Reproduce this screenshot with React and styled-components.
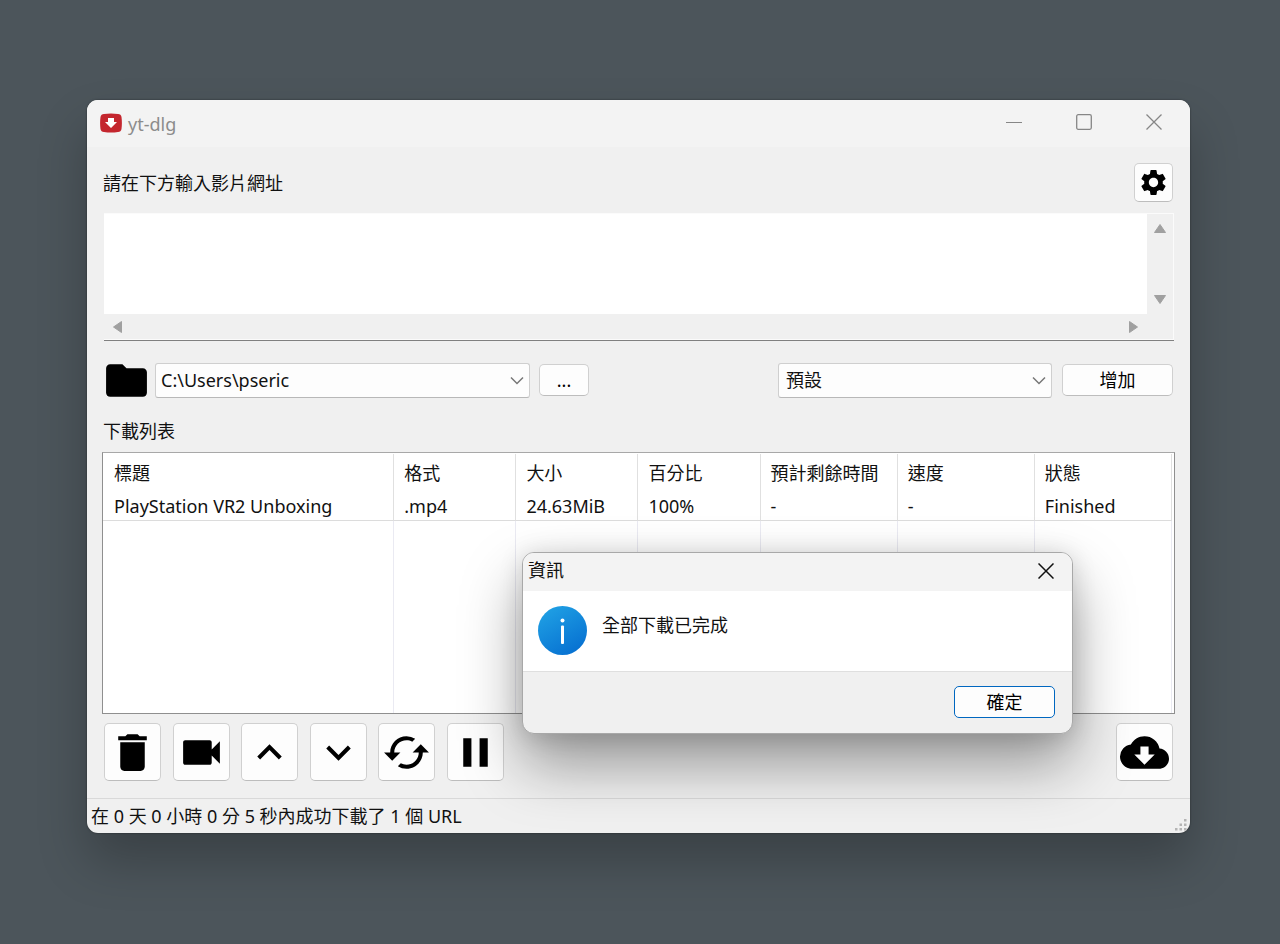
import { useState } from 'react';
import styled, { createGlobalStyle } from 'styled-components';
import {
  MdCached,
  MdCloudDownload,
  MdDelete,
  MdFolder,
  MdKeyboardArrowDown,
  MdKeyboardArrowUp,
  MdPause,
  MdSettings,
  MdVideocam,
} from 'react-icons/md';

const GlobalStyle = createGlobalStyle`
  * {
    box-sizing: border-box;
  }

  body {
    margin: 0;
    background: #4c555b;
  }

  body, button, select, textarea {
    font-family: 'Noto Sans', 'Noto Sans CJK TC', sans-serif;
    font-size: 18px;
    line-height: 24px;
    color: #111;
  }
`;

const Desktop = styled.div`
  display: flex;
  min-height: 100vh;
  padding: 100px 90px 111px 87px;
`;

const Window = styled.main`
  position: relative;
  flex: 1;
  display: flex;
  flex-direction: column;
  border-radius: 11px;
  background: #f0f0f0;
  box-shadow: 0 0 2px rgba(0, 0, 0, 0.5), 0 28px 50px rgba(0, 0, 0, 0.24);
`;

const TitleBar = styled.header`
  display: flex;
  align-items: center;
  height: 47px;
  padding: 0 1px 0 13px;
  border-radius: 11px 11px 0 0;
  background: #f3f3f3;
`;

const Title = styled.h1`
  flex: 1;
  margin: 0 0 0 6px;
  font-size: 18px;
  font-weight: 400;
  color: #8c8c8c;
`;

const CaptionButton = styled.button`
  display: flex;
  align-items: center;
  justify-content: center;
  align-self: flex-start;
  width: ${(props) => props.$width || 70}px;
  height: ${(props) => props.$height || 44}px;
  padding: 0;
  border: 0;
  background: none;
  color: ${(props) => props.$color || '#868686'};
`;

const Content = styled.div`
  flex: 1;
  display: flex;
  flex-direction: column;
  padding: 16px 15px 17px;
`;

const UrlHeader = styled.div`
  display: flex;
  align-items: center;
  justify-content: space-between;
  padding: 0 2px 0 1px;
`;

const Button = styled.button`
  display: flex;
  align-items: center;
  justify-content: center;
  width: ${(props) => props.$width}px;
  height: ${(props) => props.$height}px;
  padding: 0;
  border: 1px solid ${(props) => (props.$primary ? '#0067c0' : '#d0d0d0')};
  border-bottom-color: ${(props) => (props.$primary ? '#0067c0' : '#bdbdbd')};
  border-radius: 5px;
  background: #fdfdfd;
  color: #000;

  svg {
    flex: none;
  }
`;

const UrlBox = styled.div`
  display: grid;
  grid-template: 100px 25px / 1fr 26px;
  margin: 11px 1px 0 2px;
  padding: 1px 1px 1px 0;
  border-bottom: 1px solid #808080;
  background: #fbfbfb;
`;

const UrlInput = styled.textarea`
  width: 100%;
  height: 100%;
  padding: 2px 4px;
  border: 0;
  outline: 0;
  resize: none;
  overflow: hidden;
  background: #fff;
`;

const ScrollBar = styled.div`
  display: flex;
  flex-direction: ${(props) => (props.$vertical ? 'column' : 'row')};
  align-items: center;
  justify-content: space-between;
  padding: ${(props) => (props.$vertical ? '8px 0' : '0 8px')};
  background: #f0f0f0;
`;

const ScrollCorner = styled.div`
  background: #f0f0f0;
`;

const ScrollButton = styled.button`
  display: flex;
  padding: 0;
  border: 0;
  background: none;
  color: #a0a0a0;
`;

const OptionsRow = styled.div`
  display: flex;
  align-items: center;
  height: 50px;
  margin-top: 14px;
  padding-right: 2px;
`;

const SavePath = styled.div`
  flex: 1;
  display: flex;
  align-items: center;
  gap: 4px;
`;

const Combo = styled.div`
  display: grid;
  align-items: center;
  width: ${(props) => props.$width}px;
  margin-right: ${(props) => props.$gap}px;

  select, svg {
    grid-area: 1 / 1;
  }

  select {
    width: 100%;
    height: 35px;
    padding: 0 30px 0 ${(props) => props.$indent}px;
    border: 1px solid #cfcfcf;
    border-bottom-color: #b8b8b8;
    border-radius: 3px;
    background: #fdfdfd;
    appearance: none;
  }

  svg {
    justify-self: end;
    margin-right: 6px;
    pointer-events: none;
  }
`;

const ListLabel = styled.h2`
  margin: 14px 0 9px 1px;
  font-size: 18px;
  font-weight: 400;
`;

const ListFrame = styled.div`
  flex: 1;
  display: flex;
  min-height: 262px;
  padding: 1px 2px 0 0;
  border: 1px solid #8f8f8f;
  border-top-color: #a8a8a8;
  background: #fff;
`;

const DownloadTable = styled.table`
  width: 100%;
  table-layout: fixed;
  border-collapse: separate;
  border-spacing: 0;

  th, td {
    padding: 0 0 0 10px;
    border-right: 1px solid #e0e0e0;
    text-align: left;
    font-weight: 400;
    white-space: nowrap;
  }

  th:first-child, td:first-child {
    padding-left: 11px;
  }

  th {
    height: 38px;
  }
`;

const Row = styled.tr`
  td {
    height: 29px;
    border-bottom: 1px solid #dcdcdc;
  }
`;

const FillerRow = styled.tr`
  height: 100%;

  td {
    border-right-color: #eaeaf2;
  }
`;

const ToolBar = styled.div`
  display: flex;
  justify-content: space-between;
  margin-top: 9px;
  padding: 0 2px;
`;

const ToolGroup = styled.div`
  display: flex;
  justify-content: space-between;
  width: 400px;
`;

const StatusBar = styled.footer`
  display: flex;
  align-items: center;
  justify-content: space-between;
  height: 35px;
  padding: 1px 2px 1px 4px;
  border-top: 1px solid #d9d9d9;

  svg {
    align-self: flex-end;
  }
`;

const Dialog = styled.section`
  position: absolute;
  right: 117px;
  bottom: 99px;
  width: 551px;
  border: 1px solid #a8a8a8;
  border-radius: 12px;
  overflow: hidden;
  background: #f0f0f0;
  box-shadow: 0 30px 60px rgba(0, 0, 0, 0.38), 0 2px 24px rgba(0, 0, 0, 0.14);
`;

const DialogHeader = styled.div`
  display: flex;
  justify-content: space-between;
  height: 38px;
  padding-left: 5px;
  background: #f3f3f3;
`;

const DialogTitle = styled.h2`
  margin: 5px 0;
  font-size: 18px;
  font-weight: 400;
`;

const DialogBody = styled.div`
  display: flex;
  gap: 15px;
  height: 81px;
  padding: 15px;
  border-bottom: 1px solid #dfdfdf;
  background: #fff;
`;

const Message = styled.p`
  margin: 7px 0 0;
`;

const DialogFooter = styled.div`
  display: flex;
  justify-content: flex-end;
  padding: 14px 17px 15px;
`;

const columns = [
  { key: 'title', label: '標題', width: 291 },
  { key: 'ext', label: '格式', width: 122 },
  { key: 'size', label: '大小', width: 122 },
  { key: 'percent', label: '百分比', width: 122 },
  { key: 'eta', label: '預計剩餘時間', width: 137 },
  { key: 'speed', label: '速度', width: 137 },
  { key: 'status', label: '狀態', width: 137 },
];

const downloads = [
  {
    title: 'PlayStation VR2 Unboxing',
    ext: '.mp4',
    size: '24.63MiB',
    percent: '100%',
    eta: '-',
    speed: '-',
    status: 'Finished',
  },
];

const tools = [
  { label: '刪除', Icon: MdDelete },
  { label: '播放', Icon: MdVideocam },
  { label: '上移', Icon: MdKeyboardArrowUp },
  { label: '下移', Icon: MdKeyboardArrowDown },
  { label: '重新載入', Icon: MdCached },
  { label: '暫停', Icon: MdPause },
];

const totalWidth = columns.reduce((sum, column) => sum + column.width, 0);

function AppLogo() {
  return (
    <svg width="22" height="22" viewBox="0 0 22 22" aria-hidden="true">
      <path
        d="M4 1Q11 0 18 1Q21 1 21.5 4Q22.3 10 21.5 16Q21 19 18 19Q11 20 4 19Q1 19 .5 16Q-.3 10 .5 4Q1 1 4 1z"
        fill="#c4262e"
      />
      <path d="M8 5h6v4h3l-6 6-6-6h3z" fill="#fff" />
    </svg>
  );
}

function CloseIcon({ strokeWidth = 1.3 }) {
  return (
    <svg width="16" height="16" viewBox="0 0 16 16" aria-hidden="true">
      <path d="M.5.5l15 15M15.5.5l-15 15" stroke="currentColor" strokeWidth={strokeWidth} />
    </svg>
  );
}

function Chevron() {
  return (
    <svg width="14" height="9" viewBox="0 0 14 9" aria-hidden="true">
      <path d="M1 1.5l6 6 6-6" fill="none" stroke="#777" strokeWidth="1.5" />
    </svg>
  );
}

const arrowPaths = {
  up: 'M6 2.5L11.5 10.5H.5z',
  down: 'M6 9.500L.5 1.5h11z',
  left: 'M1.5 6L9.500.5v11z',
  right: 'M10.5 6L2.500.5v11z',
};

function ScrollArrow({ direction, label }) {
  return (
    <ScrollButton type="button" aria-label={label}>
      <svg width="12" height="12" viewBox="0 0 12 12" aria-hidden="true">
        <path
          d={arrowPaths[direction]}
          fill="currentColor"
          stroke="currentColor"
          strokeLinejoin="round"
        />
      </svg>
    </ScrollButton>
  );
}

function InfoIcon() {
  return (
    <svg width="49" height="49" viewBox="0 0 49 49" aria-hidden="true">
      <defs>
        <linearGradient id="info-fill" x1="0" y1="0" x2="0.6" y2="1">
          <stop offset="0" stopColor="#22a5e6" />
          <stop offset="1" stopColor="#0873d2" />
        </linearGradient>
      </defs>
      <circle cx="24.5" cy="24.5" r="24.5" fill="url(#info-fill)" />
      <circle cx="24.5" cy="14.5" r="2" fill="#fff" />
      <rect x="23" y="19.5" width="3" height="18.5" rx="1" fill="#fff" />
    </svg>
  );
}

function SizeGrip() {
  const dots = [
    [10, 1],
    [5.5, 5.5],
    [10, 5.5],
    [1, 10],
    [5.5, 10],
    [10, 10],
  ];

  return (
    <svg width="14" height="14" viewBox="0 0 14 14" aria-hidden="true">
      {dots.map(([x, y]) => (
        <rect key={`${x}-${y}`} x={x} y={y} width="2.5" height="2.5" fill="#b4b4b4" />
      ))}
    </svg>
  );
}

export default function App() {
  const [urls, setUrls] = useState('');
  const [dialogOpen, setDialogOpen] = useState(true);

  return (
    <Desktop>
      <GlobalStyle />
      <Window>
        <TitleBar>
          <AppLogo />
          <Title>yt-dlg</Title>
          <CaptionButton type="button" aria-label="最小化">
            <svg width="16" height="16" viewBox="0 0 16 16" aria-hidden="true">
              <path d="M0 8.5h16" stroke="currentColor" />
            </svg>
          </CaptionButton>
          <CaptionButton type="button" aria-label="最大化">
            <svg width="16" height="16" viewBox="0 0 16 16" aria-hidden="true">
              <rect
                x=".7"
                y=".7"
                width="14.6"
                height="14.6"
                rx="1.5"
                fill="none"
                stroke="currentColor"
                strokeWidth="1.3"
              />
            </svg>
          </CaptionButton>
          <CaptionButton type="button" aria-label="關閉">
            <CloseIcon />
          </CaptionButton>
        </TitleBar>

        <Content>
          <UrlHeader>
            <label htmlFor="urls">請在下方輸入影片網址</label>
            <Button type="button" aria-label="設定" $width={39} $height={39}>
              <MdSettings size={31} />
            </Button>
          </UrlHeader>

          <UrlBox>
            <UrlInput
              id="urls"
              wrap="off"
              value={urls}
              onChange={(event) => setUrls(event.target.value)}
            />
            <ScrollBar $vertical>
              <ScrollArrow direction="up" label="向上捲動" />
              <ScrollArrow direction="down" label="向下捲動" />
            </ScrollBar>
            <ScrollBar>
              <ScrollArrow direction="left" label="向左捲動" />
              <ScrollArrow direction="right" label="向右捲動" />
            </ScrollBar>
            <ScrollCorner />
          </UrlBox>

          <OptionsRow>
            <SavePath>
              <MdFolder size={49} color="#000" />
              <Combo $width={375} $indent={5} $gap={5}>
                <select aria-label="儲存路徑" defaultValue="home">
                  <option value="home">C:\Users\pseric</option>
                </select>
                <Chevron />
              </Combo>
              <Button type="button" $width={50} $height={32}>
                ...
              </Button>
            </SavePath>
            <Combo $width={274} $indent={7} $gap={10}>
              <select aria-label="格式" defaultValue="default">
                <option value="default">預設</option>
              </select>
              <Chevron />
            </Combo>
            <Button type="button" $width={111} $height={32}>
              增加
            </Button>
          </OptionsRow>

          <ListLabel id="list-label">下載列表</ListLabel>
          <ListFrame>
            <DownloadTable aria-labelledby="list-label">
              <colgroup>
                {columns.map((column) => (
                  <col
                    key={column.key}
                    style={{ width: `${(column.width / totalWidth) * 100}%` }}
                  />
                ))}
              </colgroup>
              <thead>
                <tr>
                  {columns.map((column) => (
                    <th key={column.key} scope="col">
                      {column.label}
                    </th>
                  ))}
                </tr>
              </thead>
              <tbody>
                {downloads.map((item) => (
                  <Row key={item.title}>
                    {columns.map((column) => (
                      <td key={column.key}>{item[column.key]}</td>
                    ))}
                  </Row>
                ))}
                <FillerRow aria-hidden="true">
                  {columns.map((column) => (
                    <td key={column.key} />
                  ))}
                </FillerRow>
              </tbody>
            </DownloadTable>
          </ListFrame>

          <ToolBar>
            <ToolGroup>
              {tools.map(({ label, Icon }) => (
                <Button key={label} type="button" aria-label={label} $width={57} $height={58}>
                  <Icon size={49} />
                </Button>
              ))}
            </ToolGroup>
            <Button type="button" aria-label="開始下載" $width={57} $height={58}>
              <MdCloudDownload size={49} />
            </Button>
          </ToolBar>
        </Content>

        <StatusBar>
          <span>在 0 天 0 小時 0 分 5 秒內成功下載了 1 個 URL</span>
          <SizeGrip />
        </StatusBar>

        {dialogOpen && (
          <Dialog role="dialog" aria-labelledby="dialog-title">
            <DialogHeader>
              <DialogTitle id="dialog-title">資訊</DialogTitle>
              <CaptionButton
                type="button"
                aria-label="關閉"
                $width={52}
                $height={36}
                $color="#111"
                onClick={() => setDialogOpen(false)}
              >
                <CloseIcon strokeWidth={1.5} />
              </CaptionButton>
            </DialogHeader>
            <DialogBody>
              <InfoIcon />
              <Message>全部下載已完成</Message>
            </DialogBody>
            <DialogFooter>
              <Button
                type="button"
                $primary
                $width={101}
                $height={32}
                onClick={() => setDialogOpen(false)}
              >
                確定
              </Button>
            </DialogFooter>
          </Dialog>
        )}
      </Window>
    </Desktop>
  );
}
